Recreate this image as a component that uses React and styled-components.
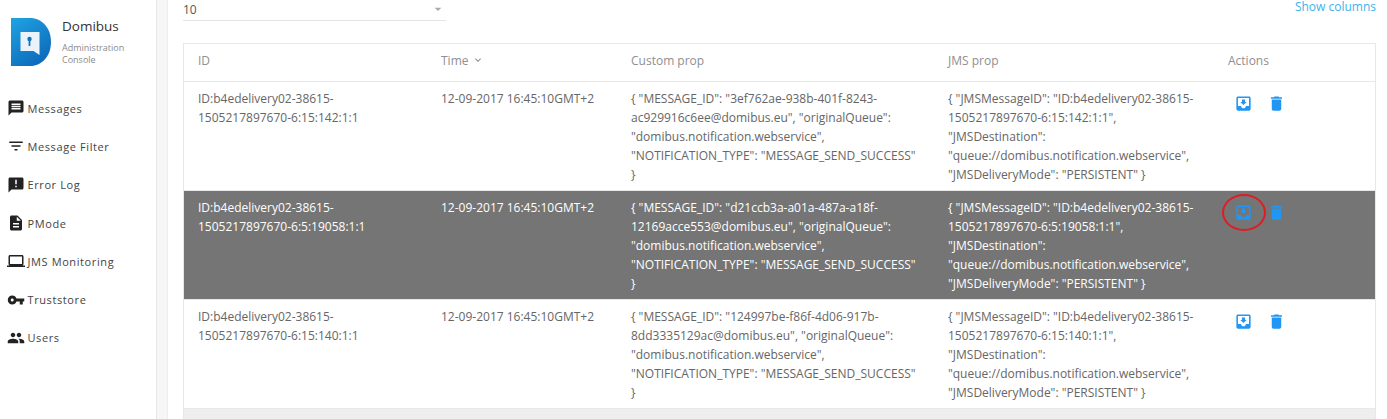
import styled, { createGlobalStyle } from 'styled-components'
import {
  MdMessage,
  MdFilterList,
  MdAnnouncement,
  MdDescription,
  MdLaptop,
  MdVpnKey,
  MdPeople,
  MdMoveToInbox,
  MdDelete,
  MdKeyboardArrowDown,
  MdArrowDropDown,
} from 'react-icons/md'

const Global = createGlobalStyle`
  html, body {
    margin: 0;
    padding: 0;
    height: 100%;
    overflow: hidden;
    background: #fff;
  }
  body {
    font-family: "Open Sans", "Noto Sans", sans-serif;
  }
`

const menu = [
  { label: 'Messages', icon: MdMessage },
  { label: 'Message Filter', icon: MdFilterList },
  { label: 'Error Log', icon: MdAnnouncement },
  { label: 'PMode', icon: MdDescription },
  { label: 'JMS Monitoring', icon: MdLaptop },
  { label: 'Truststore', icon: MdVpnKey },
  { label: 'Users', icon: MdPeople },
]

const rows = [
  {
    id: 'ID:b4edelivery02-38615-1505217897670-6:15:142:1:1',
    custom: '{ "MESSAGE_ID": "3ef762ae-938b-401f-8243-ac929916c6ee@domibus.eu", "originalQueue": "domibus.notification.webservice", "NOTIFICATION_TYPE": "MESSAGE_SEND_SUCCESS" }',
    jms: '{ "JMSMessageID": "ID:b4edelivery02-38615-1505217897670-6:15:142:1:1", "JMSDestination": "queue://domibus.notification.webservice", "JMSDeliveryMode": "PERSISTENT" }',
  },
  {
    id: 'ID:b4edelivery02-38615-1505217897670-6:5:19058:1:1',
    custom: '{ "MESSAGE_ID": "d21ccb3a-a01a-487a-a18f-12169acce553@domibus.eu", "originalQueue": "domibus.notification.webservice", "NOTIFICATION_TYPE": "MESSAGE_SEND_SUCCESS" }',
    jms: '{ "JMSMessageID": "ID:b4edelivery02-38615-1505217897670-6:5:19058:1:1", "JMSDestination": "queue://domibus.notification.webservice", "JMSDeliveryMode": "PERSISTENT" }',
    selected: true,
  },
  {
    id: 'ID:b4edelivery02-38615-1505217897670-6:15:140:1:1',
    custom: '{ "MESSAGE_ID": "124997be-f86f-4d06-917b-8dd3335129ac@domibus.eu", "originalQueue": "domibus.notification.webservice", "NOTIFICATION_TYPE": "MESSAGE_SEND_SUCCESS" }',
    jms: '{ "JMSMessageID": "ID:b4edelivery02-38615-1505217897670-6:15:140:1:1", "JMSDestination": "queue://domibus.notification.webservice", "JMSDeliveryMode": "PERSISTENT" }',
  },
]

function Logo() {
  return (
    <svg width="42" height="48" viewBox="0 0 42 48">
      <defs>
        <linearGradient id="logoFill" x1="0.2" y1="0" x2="0.8" y2="1">
          <stop offset="0" stopColor="#1f9fdf" />
          <stop offset="1" stopColor="#0b66b8" />
        </linearGradient>
      </defs>
      <path d="M1 0h19c12 0 21 10 21 24s-9 24-21 24H1z" fill="url(#logoFill)" />
      <path d="M10.5 14h19v23l-6-4h-13z" fill="#eaf3f9" />
      <circle cx="19.5" cy="21" r="2.2" fill="#1273bd" />
      <rect x="18.6" y="21" width="1.8" height="7" fill="#1273bd" />
    </svg>
  )
}

export default function App() {
  return (
    <Page>
      <Global />
      <Sidebar>
        <Brand>
          <Logo />
          <BrandText>
            <BrandName>Domibus</BrandName>
            <BrandSub>Administration Console</BrandSub>
          </BrandText>
        </Brand>
        <Nav>
          {menu.map(({ label, icon: Icon }) => (
            <NavItem key={label}>
              <Icon size={18} />
              <span>{label}</span>
            </NavItem>
          ))}
        </Nav>
      </Sidebar>
      <Gutter />
      <Main>
        <Toolbar>
          <PageSize>
            <span>10</span>
            <MdArrowDropDown size={16} />
          </PageSize>
          <ShowColumns>Show columns</ShowColumns>
        </Toolbar>
        <Table>
          <HeadRow>
            <span>ID</span>
            <SortCell>
              Time <MdKeyboardArrowDown size={12} />
            </SortCell>
            <span>Custom prop</span>
            <span>JMS prop</span>
            <span>Actions</span>
          </HeadRow>
          {rows.map((row) => (
            <Row key={row.id} $selected={row.selected}>
              <Cell>{row.id}</Cell>
              <Cell>12-09-2017 16:45:10GMT+2</Cell>
              <Cell>{row.custom}</Cell>
              <Cell>{row.jms}</Cell>
              <Actions>
                <MdMoveToInbox size={19} />
                <MdDelete size={19} />
                {row.selected && <Ring />}
              </Actions>
            </Row>
          ))}
          <TableFoot />
        </Table>
      </Main>
    </Page>
  )
}

const Page = styled.div`
  display: flex;
  height: 419px;
  background: #fff;
`

const Sidebar = styled.aside`
  width: 157px;
  flex-shrink: 0;
  padding: 18px 0 0 6.5px;
  box-sizing: border-box;
  border-right: 1px solid #e6e6e6;
`

const Brand = styled.div`
  display: flex;
  align-items: flex-start;
  gap: 10px;
  padding-left: 3.5px;
`

const BrandText = styled.div`
  width: 70px;
`

const BrandName = styled.div`
  font-size: 13.5px;
  line-height: 16px;
  color: #333;
`

const BrandSub = styled.div`
  margin-top: 8px;
  font-size: 9px;
  line-height: 12px;
  color: #8a8a8a;
`

const Nav = styled.nav`
  display: flex;
  flex-direction: column;
  margin-top: 23px;
`

const NavItem = styled.div`
  display: flex;
  align-items: center;
  gap: 3px;
  height: 38.3px;
  font-size: 11px;
  letter-spacing: 0.6px;
  color: #444;

  svg {
    color: #222;
    flex-shrink: 0;
  }
`

const Gutter = styled.div`
  width: 10px;
  flex-shrink: 0;
  background: #f6f6f6;
  border-right: 1px solid #eee;
`

const Main = styled.main`
  flex: 1;
  min-width: 0;
  padding: 0 11px 0 15px;
`

const Toolbar = styled.div`
  display: flex;
  justify-content: space-between;
  align-items: flex-start;
  height: 43px;
`

const PageSize = styled.div`
  display: flex;
  justify-content: space-between;
  align-items: center;
  width: 263px;
  height: 18px;
  padding-bottom: 2px;
  font-size: 12px;
  color: #555;
  border-bottom: 1px solid #e4e4e4;

  svg {
    color: #aaa;
  }
`

const ShowColumns = styled.a`
  font-size: 12px;
  line-height: 14px;
  color: #3ab4ee;
`

const Table = styled.div`
  border: 1px solid #e8e8e8;
  border-bottom: 0;
  font-size: 12px;
  line-height: 19.2px;
`

const columns = '243px 190px 317px 280px 1fr'

const HeadRow = styled.div`
  display: grid;
  grid-template-columns: ${columns};
  align-items: center;
  height: 33px;
  padding: 0 0 4px 14px;
  color: #8f8f8f;
  border-bottom: 1px solid #e8e8e8;
`

const SortCell = styled.span`
  display: flex;
  align-items: center;
  gap: 3px;
`

const Row = styled.div`
  display: grid;
  grid-template-columns: ${columns};
  height: 109px;
  box-sizing: border-box;
  padding: 6.5px 0 0 14px;
  color: ${(p) => (p.$selected ? '#fff' : '#666')};
  background: ${(p) => (p.$selected ? '#757575' : '#fff')};
  border-bottom: 1px solid #e8e8e8;
`

const Cell = styled.div`
  padding-right: 30px;
`

const Actions = styled.div`
  position: relative;
  display: flex;
  gap: 14.5px;
  padding: 5px 0 0 5.5px;
  height: 19px;

  svg {
    color: #2196f3;
  }
`

const Ring = styled.span`
  position: absolute;
  left: -6px;
  top: -3.5px;
  width: 40px;
  height: 33px;
  border: 2px solid #e01b24;
  border-radius: 50%;
`

const TableFoot = styled.div`
  height: 10px;
  background: #eee;
`
